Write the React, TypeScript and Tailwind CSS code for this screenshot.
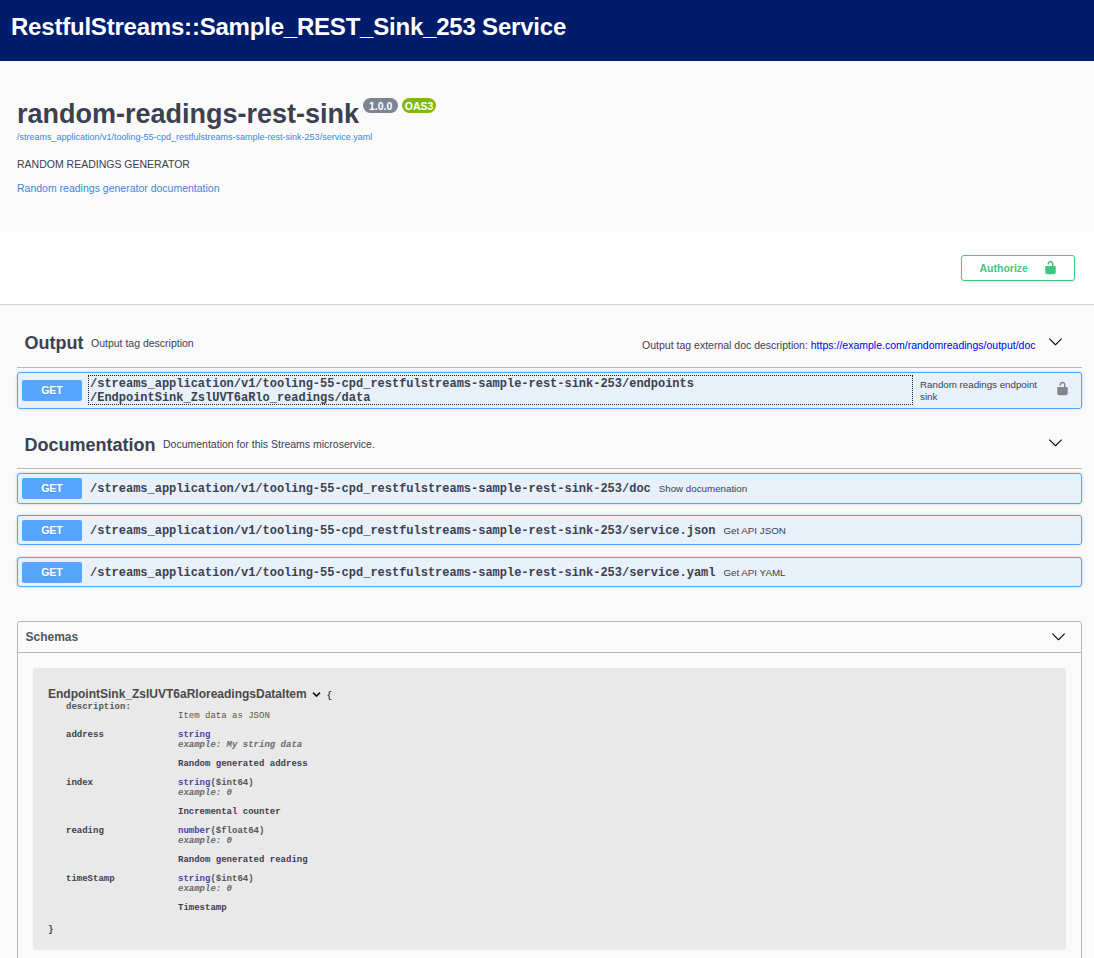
import React from "react";

const MONO = "font-['Liberation_Mono','Courier_New',monospace]";

function Unlocked({ className }: { className: string }) {
  return (
    <svg viewBox="0 0 20 20" width="15" height="15" fill="currentColor" className={className}>
      <path d="M15.8 8H14V5.6C14 2.703 12.665 1 10 1 7.334 1 6 2.703 6 5.6V6h2v-.801C8 3.754 8.797 3 10 3c1.203 0 2 .754 2 2.199V8H4c-.553 0-1 .646-1 1.199V17c0 .549.428 1.139.951 1.307l1.197.387C5.672 18.861 6.55 19 7.1 19h5.8c.549 0 1.428-.139 1.951-.307l1.196-.387c.524-.167.953-.757.953-1.306V9.199C17 8.646 16.352 8 15.8 8z" />
    </svg>
  );
}

function ArrowDown() {
  return (
    <svg viewBox="0 0 20 20" width="15" height="15" className="mb-[2px] shrink-0 text-black" fill="currentColor">
      <path d="M17.418 6.109c.272-.268.709-.268.979 0s.271.701 0 .969l-7.908 7.83c-.27.268-.707.268-.979 0l-7.908-7.83c-.27-.268-.27-.701 0-.969.271-.268.709-.268.979 0L10 13.25l7.418-7.141z" />
    </svg>
  );
}

function Method() {
  return (
    <span className="h-[21px] w-[60px] shrink-0 rounded-[2px] bg-[#57a5ff] text-center text-[10.5px] leading-[21px] font-bold text-white [text-shadow:0_1px_0_rgba(0,0,0,.1)]">
      GET
    </span>
  );
}

const ROW = "flex items-center rounded-[3px] border border-[#57a5ff] bg-[#e8f0fa] shadow-[0_0_3px_rgba(0,0,0,.19)]";

function Operation({ path, summary, className }: { path: string; summary: string; className: string }) {
  return (
    <div className={`${ROW} pl-1 ${className}`}>
      <Method />
      <span className={`${MONO} ml-2 pt-[2px] text-[12px] leading-[15px] font-bold tracking-[-0.012px]`}>{path}</span>
      <span className="ml-2 text-[9.75px] leading-[13px]">{summary}</span>
    </div>
  );
}

const BASE = "/streams_application/v1/tooling-55-cpd_restfulstreams-sample-rest-sink-253";

const PROPS = [
  { name: "address", type: "string", format: "", example: "My string data", text: "Random generated address" },
  { name: "index", type: "string", format: "($int64)", example: "0", text: "Incremental counter" },
  { name: "reading", type: "number", format: "($float64)", example: "0", text: "Random generated reading" },
  { name: "timeStamp", type: "string", format: "($int64)", example: "0", text: "Timestamp" },
];

export default function App() {
  return (
    <div className="flex h-[958px] w-[1094px] flex-col overflow-hidden bg-[#fafafa] font-['Liberation_Sans',Arial,sans-serif] whitespace-nowrap text-[#3b4151]">
      <header className="h-[61px] shrink-0 bg-[#001d6c] pl-[11px]">
        <h1 className="text-[24px] leading-[54px] font-bold tracking-[-0.21px] text-white">RestfulStreams::Sample_REST_Sink_253 Service</h1>
      </header>

      <section className="h-[171px] shrink-0 px-[17px] pt-[37px]">
        <div className="flex h-[31px] items-start">
          <h2 className="pt-px text-[27px] leading-[31px] font-bold">random-readings-rest-sink</h2>
          <span className="ml-1 h-[15px] w-[35px] rounded-full bg-[#7d8492] text-center text-[10.5px] leading-[17px] font-bold text-white">1.0.0</span>
          <span className="ml-1 h-[15px] w-[34px] rounded-full bg-[#84b70b] text-center text-[10.5px] leading-[17px] font-bold text-white">OAS3</span>
        </div>
        <a className="block text-[9px] leading-[16px] text-[#3d85df]">{BASE}/service.yaml</a>
        <p className="mt-3 text-[10.5px] leading-[15px]">RANDOM READINGS GENERATOR</p>
        <a className="mt-[9px] block text-[10.5px] leading-[15px] text-[#3d85df]">Random readings generator documentation</a>
      </section>

      <section className="flex h-[72px] shrink-0 items-start justify-end bg-white pt-[23px] pr-[19px] shadow-[0_1px_1px_rgba(0,0,0,.15)]">
        <button className="flex h-[26px] w-[114px] items-center justify-between rounded-[3px] border border-[#40c883] pr-4 pl-[17.5px] text-[10.5px] font-bold text-[#40c883] shadow-[0_1px_2px_rgba(0,0,0,.1)]">
          <span className="pt-[2px]">Authorize</span>
          <Unlocked className="mb-px text-[#40c883]" />
        </button>
      </section>

      <main className="flex min-h-0 grow flex-col pr-3 pl-[17px]">
        <div className="mt-[14px] flex h-[50px] shrink-0 items-center border-b border-[#b6b9c0] pr-[19px] pl-[7.5px]">
          <h3 className="text-[18px] leading-[50px] font-bold">Output</h3>
          <span className="ml-[7.5px] pt-[2px] text-[10.5px]">Output tag description</span>
          <span className="mt-[6px] ml-auto text-[10.5px]">
            Output tag external doc description: <a className="text-[#0000ee]">https://example.com/randomreadings/output/doc</a>
          </span>
          <span className="ml-[12.5px]">
            <ArrowDown />
          </span>
        </div>
        <div className={`${ROW} mt-1 h-[37px] shrink-0 pr-[11px] pl-1`}>
          <Method />
          <span className={`${MONO} mb-px ml-1.5 h-[30px] w-[825px] shrink-0 border border-dotted border-[#222] pt-px pl-px text-[12px] leading-[14px] font-bold tracking-[-0.012px]`}>
            {BASE}/endpoints
            <br />
            /EndpointSink_ZslUVT6aRlo_readings/data
          </span>
          <span className="ml-[7px] text-[9.75px] leading-[12px]">
            Random readings endpoint
            <br />
            sink
          </span>
          <Unlocked className="mb-1 ml-auto text-[#83868b]" />
        </div>

        <div className="mt-[10px] flex h-[50px] shrink-0 items-center border-b border-[#b6b9c0] pr-[19px] pl-[7.5px]">
          <h3 className="pt-[2px] text-[18px] leading-[50px] font-bold">Documentation</h3>
          <span className="ml-[7.5px] pt-[2px] text-[10.5px]">Documentation for this Streams microservice.</span>
          <span className="ml-auto">
            <ArrowDown />
          </span>
        </div>
        <Operation className="mt-1 h-[31px] shrink-0" path={`${BASE}/doc`} summary="Show documenation" />
        <Operation className="mt-[11px] h-[30px] shrink-0" path={`${BASE}/service.json`} summary="Get API JSON" />
        <Operation className="mt-3 h-[30px] shrink-0" path={`${BASE}/service.yaml`} summary="Get API YAML" />

        <div className="mt-[34px] h-[400px] shrink-0 rounded-[3px] border border-[#b6b9bc]">
          <div className="flex h-[31px] items-center justify-between border-b border-[#b6b9bc] pr-[15px] pl-[7.5px]">
            <h4 className="text-[12px] leading-[30px] font-bold text-[#555]">Schemas</h4>
            <ArrowDown />
          </div>
          <div className={`${MONO} mx-[15px] mt-[15px] h-[282px] rounded-[3px] bg-[#e9e9e9] px-[15px] pt-[18px] text-[9px] leading-[10px] font-bold`}>
            <div className="flex h-4 items-center">
              <span className="font-['Liberation_Sans',Arial,sans-serif] text-[12px] leading-4 text-[#494949]">EndpointSink_ZslUVT6aRloreadingsDataItem</span>
              <svg viewBox="0 0 24 24" width="15" height="15" className="ml-[2px] rotate-90 text-black">
                <path fill="currentColor" stroke="currentColor" strokeWidth="0.5" d="M10 6L8.59 7.41 13.17 12l-4.58 4.59L10 18l6-6z" />
              </svg>
              <span className="mt-[3px] ml-[3px]">{"{"}</span>
            </div>
            <div className="ml-[18px] grid grid-cols-[112px_auto] text-[#555]">
              <span>description:</span>
              <span className="pt-[9px] font-normal">Item data as JSON</span>
            </div>
            {PROPS.map((p) => (
              <div key={p.name} className="ml-[18px] grid grid-cols-[112px_auto] pt-[9px]">
                <span>{p.name}</span>
                <div>
                  <div>
                    <span className="text-[#4a45a5]">{p.type}</span>
                    <span className="text-[#555]">{p.format}</span>
                  </div>
                  <div className="text-[#6b6b6b] italic">example: {p.example}</div>
                  <div className="pt-[9px]">{p.text}</div>
                </div>
              </div>
            ))}
            <div className="mt-3">{"}"}</div>
          </div>
        </div>
      </main>
    </div>
  );
}
